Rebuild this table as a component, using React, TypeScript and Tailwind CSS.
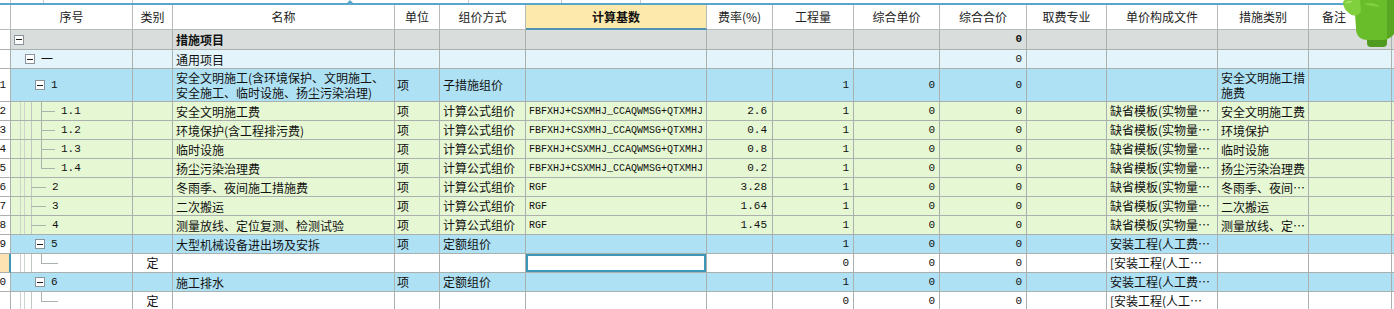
import React from 'react';

const COLS =
  'grid grid-cols-[11px_122px_40px_222px_45px_86px_181px_66px_81px_86px_87px_80px_111px_91px_83px_2px]';

type Tone = 'gray' | 'pale' | 'blue' | 'green' | 'white';
type TreeKind = 'root' | 'group' | 'node' | 'sub' | 'subLast' | 'leaf' | 'child';

const toneBg: Record<Tone, string> = {
  gray: 'bg-[#d9dedc]',
  pale: 'bg-[#e3f4fa]',
  blue: 'bg-[#afe1f5]',
  green: 'bg-[#e6f7d3]',
  white: 'bg-white',
};

type Row = {
  no?: string;
  tone: Tone;
  h: string;
  tree: TreeKind;
  code?: string;
  kind?: string;
  name?: React.ReactNode;
  unit?: string;
  method?: string;
  base?: string;
  rate?: string;
  qty?: string;
  price?: string;
  total?: string;
  file?: string;
  cat?: React.ReactNode;
  bold?: boolean;
  selected?: boolean;
};

const F = 'FBFXHJ+CSXMHJ_CCAQWMSG+QTXMHJ';
const TPL = '缺省模板(实物量…';

const rows: Row[] = [
  { tone: 'gray', h: 'h-[20px]', tree: 'root', name: '措施项目', total: '0', bold: true },
  { tone: 'pale', h: 'h-[19px]', tree: 'group', code: '一', name: '通用项目', total: '0' },
  {
    no: '1', tone: 'blue', h: 'h-[33px]', tree: 'node', code: '1',
    name: (<>安全文明施工(含环境保护、文明施工、<br />安全施工、临时设施、扬尘污染治理)</>),
    unit: '项', method: '子措施组价', qty: '1', price: '0', total: '0',
    cat: (<>安全文明施工措<br />施费</>),
  },
  { no: '2', tone: 'green', h: 'h-[19px]', tree: 'sub', code: '1.1', name: '安全文明施工费', unit: '项', method: '计算公式组价', base: F, rate: '2.6', qty: '1', price: '0', total: '0', file: TPL, cat: '安全文明施工费' },
  { no: '3', tone: 'green', h: 'h-[19px]', tree: 'sub', code: '1.2', name: '环境保护(含工程排污费)', unit: '项', method: '计算公式组价', base: F, rate: '0.4', qty: '1', price: '0', total: '0', file: TPL, cat: '环境保护' },
  { no: '4', tone: 'green', h: 'h-[19px]', tree: 'sub', code: '1.3', name: '临时设施', unit: '项', method: '计算公式组价', base: F, rate: '0.8', qty: '1', price: '0', total: '0', file: TPL, cat: '临时设施' },
  { no: '5', tone: 'green', h: 'h-[19px]', tree: 'subLast', code: '1.4', name: '扬尘污染治理费', unit: '项', method: '计算公式组价', base: F, rate: '0.2', qty: '1', price: '0', total: '0', file: TPL, cat: '扬尘污染治理费' },
  { no: '6', tone: 'green', h: 'h-[19px]', tree: 'leaf', code: '2', name: '冬雨季、夜间施工措施费', unit: '项', method: '计算公式组价', base: 'RGF', rate: '3.28', qty: '1', price: '0', total: '0', file: TPL, cat: '冬雨季、夜间…' },
  { no: '7', tone: 'green', h: 'h-[19px]', tree: 'leaf', code: '3', name: '二次搬运', unit: '项', method: '计算公式组价', base: 'RGF', rate: '1.64', qty: '1', price: '0', total: '0', file: TPL, cat: '二次搬运' },
  { no: '8', tone: 'green', h: 'h-[19px]', tree: 'leaf', code: '4', name: '测量放线、定位复测、检测试验', unit: '项', method: '计算公式组价', base: 'RGF', rate: '1.45', qty: '1', price: '0', total: '0', file: TPL, cat: '测量放线、定…' },
  { no: '9', tone: 'blue', h: 'h-[19px]', tree: 'node', code: '5', name: '大型机械设备进出场及安拆', unit: '项', method: '定额组价', qty: '1', price: '0', total: '0', file: '安装工程(人工费…' },
  { tone: 'white', h: 'h-[19px]', tree: 'child', kind: '定', qty: '0', price: '0', total: '0', file: '[安装工程(人工…', selected: true },
  { no: '0', tone: 'blue', h: 'h-[19px]', tree: 'node', code: '6', name: '施工排水', unit: '项', method: '定额组价', qty: '1', price: '0', total: '0', file: '安装工程(人工费…' },
  { tone: 'white', h: 'h-[19px]', tree: 'child', kind: '定', qty: '0', price: '0', total: '0', file: '[安装工程(人工…' },
];

const headers = ['', '序号', '类别', '名称', '单位', '组价方式', '计算基数', '费率(%)', '工程量', '综合单价', '综合合价', '取费专业', '单价构成文件', '措施类别', '备注', ''];

const line = 'border-r border-b border-[#a9b0ad]';
const mono = "font-['Liberation_Mono',monospace]";

function MinusBox() {
  return (
    <span className="flex h-[10px] w-[10px] shrink-0 items-center justify-center border border-[#8a949c] bg-white">
      <span className="h-px w-[6px] bg-[#1a1a1a]" />
    </span>
  );
}

function Guides({ kind }: { kind: TreeKind }) {
  if (kind === 'root' || kind === 'group' || kind === 'node') return null;
  return (
    <>
      <span className="absolute left-[9px] top-0 h-full w-px bg-[#cdd4ce]" />
      <span className="absolute left-[13px] top-0 h-full w-px bg-[#cdd4ce]" />
      <span className="absolute left-[20px] top-0 h-full w-px bg-[#bfc7c1]" />
      {kind === 'sub' && <span className="absolute left-[30px] top-0 h-full w-px bg-[#a9b3ab]" />}
      {kind === 'subLast' && <span className="absolute left-[30px] top-0 h-1/2 w-px bg-[#a9b3ab]" />}
      {(kind === 'sub' || kind === 'subLast') && (
        <span className="absolute left-[30px] top-1/2 h-px w-[14px] bg-[#a9b3ab]" />
      )}
      {kind === 'leaf' && <span className="absolute left-[20px] top-1/2 h-px w-[15px] bg-[#a9b3ab]" />}
      {kind === 'child' && (
        <>
          <span className="absolute left-[30px] top-0 h-1/2 w-px bg-[#a9b3ab]" />
          <span className="absolute left-[30px] top-1/2 h-px w-[17px] bg-[#a9b3ab]" />
        </>
      )}
    </>
  );
}

function TreeCell({ row }: { row: Row }) {
  const pad =
    row.tree === 'root' ? 'pl-[3px]' :
    row.tree === 'group' ? 'pl-[14px]' :
    row.tree === 'node' ? 'pl-[24px]' :
    row.tree === 'leaf' ? 'pl-[41px]' :
    'pl-[50px]';
  return (
    <div className={`${line} relative flex items-center ${pad}`}>
      <Guides kind={row.tree} />
      {(row.tree === 'root' || row.tree === 'group' || row.tree === 'node') && <MinusBox />}
      {row.code && (
        <span className={row.tree === 'group' ? 'ml-[6px] text-[12px]' : row.tree === 'node' ? `ml-[6px] ${mono} text-[11px]` : `${mono} text-[11px]`}>
          {row.code}
        </span>
      )}
    </div>
  );
}

function Mascot() {
  return (
    <svg className="absolute right-0 top-0" width="52" height="48" viewBox="0 0 52 48">
      {/* leg */}
      <path d="M25 30 H45 V43 Q45 47 41 47 H29 Q25 47 25 43 Z" fill="#4f9a1f" />
      {/* body */}
      <path d="M12 0 H52 V28 Q52 40 40 40 H26 Q14 40 14 28 Z" fill="#69bd2a" />
      <path d="M45 0 H52 V34 Q49 38 45 38 Z" fill="#58a622" />
      {/* arm raised */}
      <path d="M1 2 Q3 -2 10 0 L18 0 L19 12 Q14 18 8 14 Q1 9 1 2 Z" fill="#80cf3d" />
      <path d="M3 3 Q6 0 11 1 Q8 4 3 3 Z" fill="#a6e36a" />
      <path d="M22 4 Q32 1 38 7 Q30 7 22 4 Z" fill="#86d448" opacity="0.8" />
    </svg>
  );
}

export default function App() {
  return (
    <div className="relative h-[309px] w-[1394px] overflow-hidden bg-white font-['Noto_Sans_CJK_SC',sans-serif] text-[12px] text-[#111]">
      {/* top strip */}
      <div className="flex h-[3px]">
        <div className="w-[11px] border-r border-[#c8c8c8]" />
        <div className="w-[33px] border-r border-[#c8c8c8]" />
        <div className="w-[89px] border-r border-[#c8c8c8]" />
        <div className="w-[336px] border-r border-[#c8c8c8]" />
        <div className="w-[93px] border-r border-[#c8c8c8]" />
        <div className="w-[79px] border-r border-[#c8c8c8]" />
      </div>
      <div className="relative h-[2px] bg-[#5aa6cb]">
        <span className="absolute left-[346px] top-[-3px] h-0 w-0 border-x-[4px] border-b-[4px] border-x-transparent border-b-[#5aa6cb]" />
      </div>

      {/* header */}
      <div className={`${COLS} h-[25px]`}>
        {headers.map((h, i) =>
          i === 6 ? (
            <div key={i} className="flex items-center justify-center border-r border-b-2 border-r-[#b5bbb8] border-b-[#4e93b3] bg-[#fde9ab] font-bold">
              {h}
            </div>
          ) : i === 14 ? (
            <div key={i} className="flex items-center border-r border-b border-[#b5bbb8] bg-white pl-[13px] text-[#222]">
              {h}
            </div>
          ) : (
            <div key={i} className="flex items-center justify-center border-r border-b border-[#b5bbb8] bg-white text-[#222]">
              {h}
            </div>
          )
        )}
      </div>

      {/* body */}
      {rows.map((r, i) => (
        <div key={i} className={`${COLS} ${r.h} ${toneBg[r.tone]}`}>
          {r.selected ? (
            <div className="border-b border-r-2 border-b-[#a9b0ad] border-r-[#3c9ab4] bg-[#fde3b1]" />
          ) : (
            <div className={`${line} flex items-center justify-end overflow-hidden bg-white pr-[4px] ${mono} text-[11px]`}>
              {r.no}
            </div>
          )}
          <TreeCell row={r} />
          <div className={`${line} flex items-center justify-center`}>{r.kind}</div>
          <div className={`${line} flex items-center overflow-hidden whitespace-nowrap pl-[3px] leading-[15px] ${r.bold ? 'font-bold' : ''}`}>{r.name}</div>
          <div className={`${line} flex items-center pl-[2px]`}>{r.unit}</div>
          <div className={`${line} flex items-center whitespace-nowrap pl-[3px]`}>{r.method}</div>
          {r.selected ? (
            <div className="border-b border-r border-[#a9b0ad] p-0">
              <div className="h-full w-full border-2 border-[#3c97b8]" />
            </div>
          ) : (
            <div className={`${line} flex items-center whitespace-nowrap pl-[3px] ${mono} text-[10px]`}>{r.base}</div>
          )}
          <div className={`${line} flex items-center justify-end pr-[5px] ${mono} text-[11px]`}>{r.rate}</div>
          <div className={`${line} flex items-center justify-end pr-[4px] ${mono} text-[11px]`}>{r.qty}</div>
          <div className={`${line} flex items-center justify-end pr-[4px] ${mono} text-[11px]`}>{r.price}</div>
          <div className={`${line} flex items-center justify-end pr-[4px] ${mono} text-[11px] ${r.bold ? 'font-bold' : ''}`}>{r.total}</div>
          <div className={line} />
          <div className={`${line} flex items-center overflow-hidden whitespace-nowrap pl-[3px]`}>{r.file}</div>
          <div className={`${line} flex items-center overflow-hidden whitespace-nowrap pl-[3px] leading-[15px]`}>{r.cat}</div>
          <div className={line} />
          <div className="border-b border-[#a9b0ad]" />
        </div>
      ))}

      <Mascot />
    </div>
  );
}
